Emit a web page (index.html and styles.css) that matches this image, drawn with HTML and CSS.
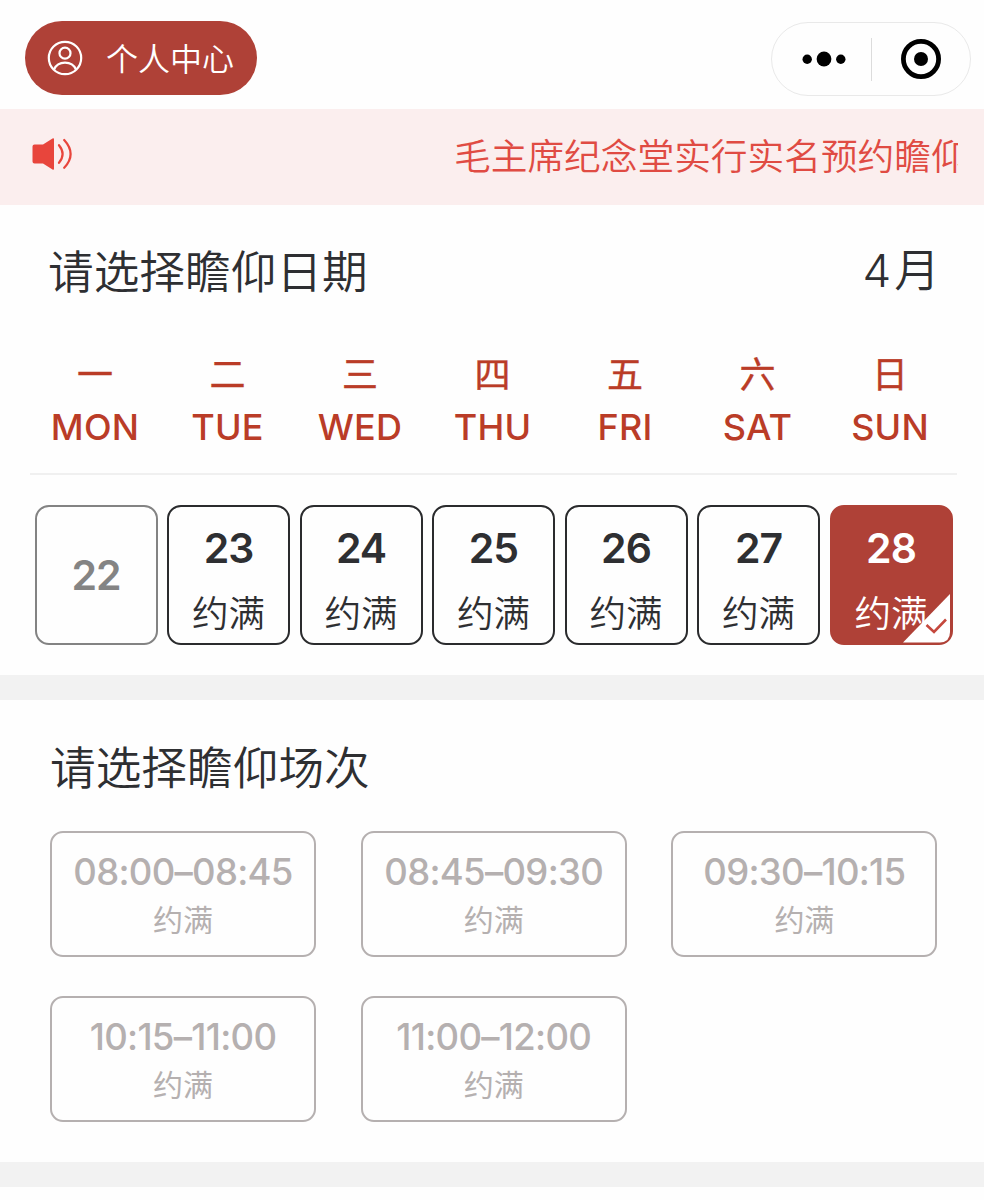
FILE: index.html
```
<!DOCTYPE html>
<html lang="zh-CN">
<head>
    <meta charset="UTF-8">
    <meta name="viewport" content="width=device-width, initial-scale=1.0">
    <title>预约瞻仰</title>
    <link rel="stylesheet" href="styles.css">
</head>
<body>

    <!-- 顶部导航 -->
    <header class="navbar">
        <button class="user-btn">
            <svg class="user-icon" width="36" height="36" viewBox="0 0 36 36" fill="none" stroke="#fff" stroke-width="2.2">
                <circle cx="18" cy="18" r="16.2"/>
                <circle cx="18" cy="13.2" r="5.5"/>
                <path d="M7 29.5C9 24.8 13 22.6 18 22.6S27 24.8 29 29.5"/>
            </svg>
            <span>个人中心</span>
        </button>
        <div class="capsule">
            <svg class="capsule-more" width="44" height="16" viewBox="0 0 44 16">
                <circle cx="5.2" cy="8.3" r="4.7"/>
                <circle cx="22" cy="8" r="7.4"/>
                <circle cx="38.8" cy="8.3" r="4.7"/>
            </svg>
            <span class="capsule-line"></span>
            <svg class="capsule-close" width="40" height="40" viewBox="0 0 40 40">
                <circle cx="20" cy="20" r="17.6" fill="none" stroke="#000" stroke-width="4.8"/>
                <circle cx="20" cy="20" r="7"/>
            </svg>
        </div>
    </header>

    <!-- 滚动公告 -->
    <div class="notice">
        <svg class="notice-icon" width="42" height="34" viewBox="0 0 42 34">
            <path d="M2.5 7.5H11L20.5 1.4Q22 .6 22 2.2V31.8Q22 33.4 20.5 32.6L11 26.5H2.5Q.5 26.5 .5 24.5V9.5Q.5 7.5 2.5 7.5Z" fill="#e8453c"/>
            <path d="M27 8.2Q34.2 17 27 25.8M32.2 3Q45 17 32.2 30.8" fill="none" stroke="#e8453c" stroke-width="2.2" stroke-linecap="round"/>
        </svg>
        <div class="notice-text">毛主席纪念堂实行实名预约瞻仰</div>
    </div>

    <!-- 日期 -->
    <section class="date-section">
        <div class="title">
            <span>请选择瞻仰日期</span>
            <span class="month">4月</span>
        </div>
        <div class="week">
            <div class="week-day"><span>一</span><b>MON</b></div>
            <div class="week-day"><span>二</span><b>TUE</b></div>
            <div class="week-day"><span>三</span><b>WED</b></div>
            <div class="week-day"><span>四</span><b>THU</b></div>
            <div class="week-day"><span>五</span><b>FRI</b></div>
            <div class="week-day"><span>六</span><b>SAT</b></div>
            <div class="week-day"><span>日</span><b>SUN</b></div>
        </div>
        <div class="dates">
            <div class="date disabled"><b>22</b></div>
            <div class="date"><b>23</b><span>约满</span></div>
            <div class="date"><b>24</b><span>约满</span></div>
            <div class="date"><b>25</b><span>约满</span></div>
            <div class="date"><b>26</b><span>约满</span></div>
            <div class="date"><b>27</b><span>约满</span></div>
            <div class="date selected">
                <b>28</b><span>约满</span>
                <svg class="check" width="48" height="49" viewBox="0 0 48 49">
                    <path d="M47 0V38Q47 48 37 48.5H0Z" fill="#fff"/>
                    <path d="M23.5 31L31 38L43 25.5" fill="none" stroke="#c5483d" stroke-width="2.6"/>
                </svg>
            </div>
        </div>
    </section>

    <!-- 场次 -->
    <section class="time-section">
        <div class="title">
            <span>请选择瞻仰场次</span>
        </div>
        <div class="times">
            <div class="time"><b>08:00–08:45</b><span>约满</span></div>
            <div class="time"><b>08:45–09:30</b><span>约满</span></div>
            <div class="time"><b>09:30–10:15</b><span>约满</span></div>
            <div class="time"><b>10:15–11:00</b><span>约满</span></div>
            <div class="time"><b>11:00–12:00</b><span>约满</span></div>
        </div>
    </section>

</body>
</html>
```
FILE: styles.css
```
* {
    box-sizing: border-box;
}
body {
    margin: 0;
    background-color: #fefefe;
    color: #2e2f32;
    font-family: "Noto Sans CJK SC", sans-serif;
    font-weight: 350;
}
b {
    font-family: Inter, sans-serif;
    font-weight: 500;
    font-feature-settings: "calt" 0;
}
/* 顶部导航 */
.navbar {
    display: flex;
    justify-content: space-between;
    height: 109px;
    padding: 21px 13px 0 25px;
}
.user-btn {
    display: flex;
    align-items: center;
    gap: 23px;
    width: 232px;
    height: 74px;
    padding: 0 0 0 22px;
    border: none;
    border-radius: 37px;
    background-color: #af4137;
    color: #fff;
    font: inherit;
    font-size: 32px;
    white-space: nowrap;
}
.user-btn span {
    margin-top: -3px;
}
.user-icon {
    flex: none;
}
.capsule {
    display: flex;
    align-items: center;
    width: 200px;
    height: 74px;
    margin-top: 1px;
    border: 1px solid #e9e9e9;
    border-radius: 37px;
}
.capsule-more {
    margin-left: 30px;
}
.capsule-line {
    width: 1px;
    height: 43px;
    margin: 0 29px 0 25px;
    background-color: #dcdcdc;
}
/* 滚动公告 */
.notice {
    display: flex;
    align-items: center;
    height: 96px;
    padding: 0 26px 0 32px;
    background-color: #fbeeee;
}
.notice-icon {
    margin-top: -6px;
}
.notice-text {
    width: 504px;
    margin: -6px 0 0 auto;
    overflow: hidden;
    white-space: nowrap;
    font-size: 36.7px;
    line-height: 60px;
    color: #e04b43;
}
/* 标题 */
.title {
    display: flex;
    justify-content: space-between;
    font-size: 45.7px;
    line-height: 60px;
}
.month {
    margin: 2px -4px -2px 0;
    font-family: Inter, "Noto Sans CJK SC", sans-serif;
    font-weight: 350;
    letter-spacing: 3px;
}
/* 日期 */
.date-section {
    height: 470px;
    padding: 34px 27px 0 30px;
}
.date-section .title {
    padding: 0 18px;
}
.week {
    display: grid;
    grid-template-columns: repeat(7, 132.5px);
    height: 176px;
    padding-top: 46px;
    border-bottom: 2px solid #f0f0f0;
    color: #ba3c27;
}
.week-day {
    display: flex;
    flex-direction: column;
    align-items: center;
    width: 130px;
    font-size: 36px;
    line-height: 54px;
}
.week-day span {
    font-weight: 400;
    -webkit-text-stroke: 0.4px #ba3c27;
}
.week-day b {
    padding-top: 1px;
    font-weight: 450;
    letter-spacing: 0.2px;
}
.dates {
    display: grid;
    grid-template-columns: repeat(7, 123px);
    column-gap: 9.5px;
    padding: 30px 0 0 4.5px;
}
.date {
    position: relative;
    display: flex;
    flex-direction: column;
    align-items: center;
    height: 140px;
    padding-top: 10px;
    border: 2px solid #2a2b2d;
    border-radius: 14px;
    font-size: 36.5px;
    line-height: 63px;
}
.date b {
    font-size: 41px;
    font-weight: 560;
    letter-spacing: -1px;
}
.date.disabled {
    justify-content: center;
    padding-top: 0;
    border-color: #838383;
    color: #848484;
}
.date.selected {
    border-color: #af4137;
    background-color: #af4137;
    color: #fff;
}
.check {
    position: absolute;
    right: 0;
    bottom: 0;
}
/* 场次 */
.time-section {
    height: 512px;
    padding: 35px 46px 0 50px;
    border-top: 25px solid #f2f2f2;
    border-bottom: 25px solid #f2f2f2;
}
.times {
    display: grid;
    grid-template-columns: repeat(3, 266px);
    gap: 39px 44.7px;
    padding-top: 36px;
}
.time {
    display: flex;
    flex-direction: column;
    align-items: center;
    height: 126px;
    padding-top: 16px;
    border: 2px solid #b5b0b0;
    border-radius: 13px;
    font-size: 30px;
    line-height: 46px;
    font-weight: 400;
    color: #b5b0b0;
}
.time b {
    font-size: 36.5px;
    font-weight: 480;
    letter-spacing: -0.7px;
}
```
